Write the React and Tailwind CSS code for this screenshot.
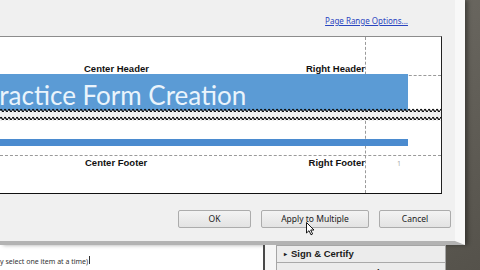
import React from "react";

const ui = { fontFamily: '"Noto Sans", "Liberation Sans", sans-serif' };
const bold = { fontFamily: '"Liberation Sans", Arial, sans-serif' };

function PageBreak() {
    return (
        <svg width="441" height="13" className="relative block">
            <defs>
                <pattern id="wave" width="4" height="4" patternUnits="userSpaceOnUse">
                    <path d="M0 2.6 Q1 0.4 2 2.6 T4 2.6" stroke="#111" strokeWidth="1.3" fill="none" />
                </pattern>
            </defs>
            <rect x="0" y="0" width="408" height="2.5" fill="#5b9bd5" />
            <rect x="0" y="4" width="441" height="5" fill="#f1f1f1" />
            <rect x="0" y="0" width="441" height="4.5" fill="url(#wave)" />
            <rect x="0" y="8.5" width="441" height="4.5" fill="url(#wave)" />
        </svg>
    );
}

function Button({ label, width }) {
    return (
        <button
            className={`h-[18px] ${width} rounded-[2px] border border-[#acacac] bg-gradient-to-b from-[#f3f3f3] to-[#e3e3e3] text-[8.5px] leading-none text-[#222]`}
            style={ui}
        >
            {label}
        </button>
    );
}

export default function App() {
    return (
        <div className="relative h-[270px] w-[480px] overflow-hidden bg-gradient-to-br from-[#77746c] via-[#68655e] to-[#55524b]">
            <div className="flex h-[245px]">
                <div className="flex w-[465px] flex-col border-r-[10px] border-b-[4px] border-r-[#f8f8f8] border-b-[#b3b3b3] bg-[#f0f0f0] shadow-[3px_0_4px_rgba(0,0,0,0.35)]">
                    <div className="flex h-[36px] justify-end pr-[47px] pt-[15px]">
                        <span className="text-[8px] leading-[11px] text-[#2a45c0] underline" style={ui}>
                            Page Range Options...
                        </span>
                    </div>

                    <div className="relative h-[158px] w-[442px] border-t border-r border-b border-t-[#8c8c8c] border-r-[#222] border-b-[#111] bg-white">
                        <div className="absolute top-0 bottom-0 left-[365px] border-l border-dashed border-[#9a9a9a]" />
                        <div className="absolute top-[38px] right-0 left-[365px] border-t border-dashed border-[#9a9a9a]" />

                        <div className="flex h-[37px] items-end text-[9.5px] font-bold leading-[11px] text-[#111]" style={bold}>
                            <span className="ml-[84px]">Center Header</span>
                            <span className="mr-[76px] ml-auto">Right Header</span>
                        </div>

                        <div className="relative h-[34px] w-[408px] overflow-hidden bg-[#5b9bd5]">
                            <div
                                className="-ml-[16px] whitespace-nowrap pt-[7px] text-[26px] leading-[28px] text-[#eaf4fc]"
                                style={{ fontFamily: 'Lato, "Open Sans", sans-serif' }}
                            >
                                Practice Form Creation
                            </div>
                        </div>

                        <PageBreak />

                        <div className="relative mt-[18px] h-[7px] w-[408px] bg-[#4b8bcf]" />

                        <div className="mt-[9px] border-t border-dashed border-[#9a9a9a]" />

                        <div className="flex items-start pt-[1px] text-[9.5px] font-bold leading-[11px] text-[#111]" style={bold}>
                            <span className="ml-[85px]">Center Footer</span>
                            <span className="mr-[76px] ml-auto">Right Footer</span>
                        </div>
                        <span className="absolute top-[122px] left-[397px] text-[7px] text-[#aaa]" style={ui}>
                            1
                        </span>
                    </div>

                    <div className="mt-[16px] flex justify-end gap-[10px] pr-[4px]">
                        <Button label="OK" width="w-[73px]" />
                        <Button label="Apply to Multiple" width="w-[108px]" />
                        <Button label="Cancel" width="w-[72px]" />
                    </div>
                </div>
            </div>

            <div className="flex h-[25px] w-[446px] bg-white">
                <div className="w-[263px] pt-[1px]">
                    <span className="text-[7px] leading-[10px] text-[#333]" style={ui}>
                        y select one item at a time)
                    </span>
                    <span className="ml-[1px] inline-block h-[8px] w-px bg-[#333] align-middle" />
                </div>
                <div className="w-[2px] bg-[#4a4a4a]" />
                <div className="w-[11px] bg-[#f6f6f6]" />
                <div className="flex flex-1 flex-col overflow-hidden border-x border-t border-[#a5a5a5] bg-[#ececec]" style={bold}>
                    <div className="flex h-[17px] shrink-0 items-center border-b border-[#a9a9a9] pl-[7px] text-[9.5px] font-bold text-[#1a1a1a]">
                        <span className="mr-[4px] text-[6px]">▸</span>
                        Sign &amp; Certify
                    </div>
                    <div className="flex items-start pt-[4px] pl-[7px] text-[9.5px] font-bold leading-[11px] text-[#1a1a1a]">
                        <span className="mr-[4px] text-[6px]">▸</span>
                        Document Processing
                    </div>
                </div>
            </div>

            <svg className="absolute top-[222px] left-[306px]" width="9" height="14" viewBox="0 0 9 14">
                <path d="M0.5 0.5 L0.5 11 L3 8.7 L5 12.8 L6.6 12 L4.7 8 L8 8 Z" fill="#fff" stroke="#000" strokeWidth="0.9" />
            </svg>
        </div>
    );
}
